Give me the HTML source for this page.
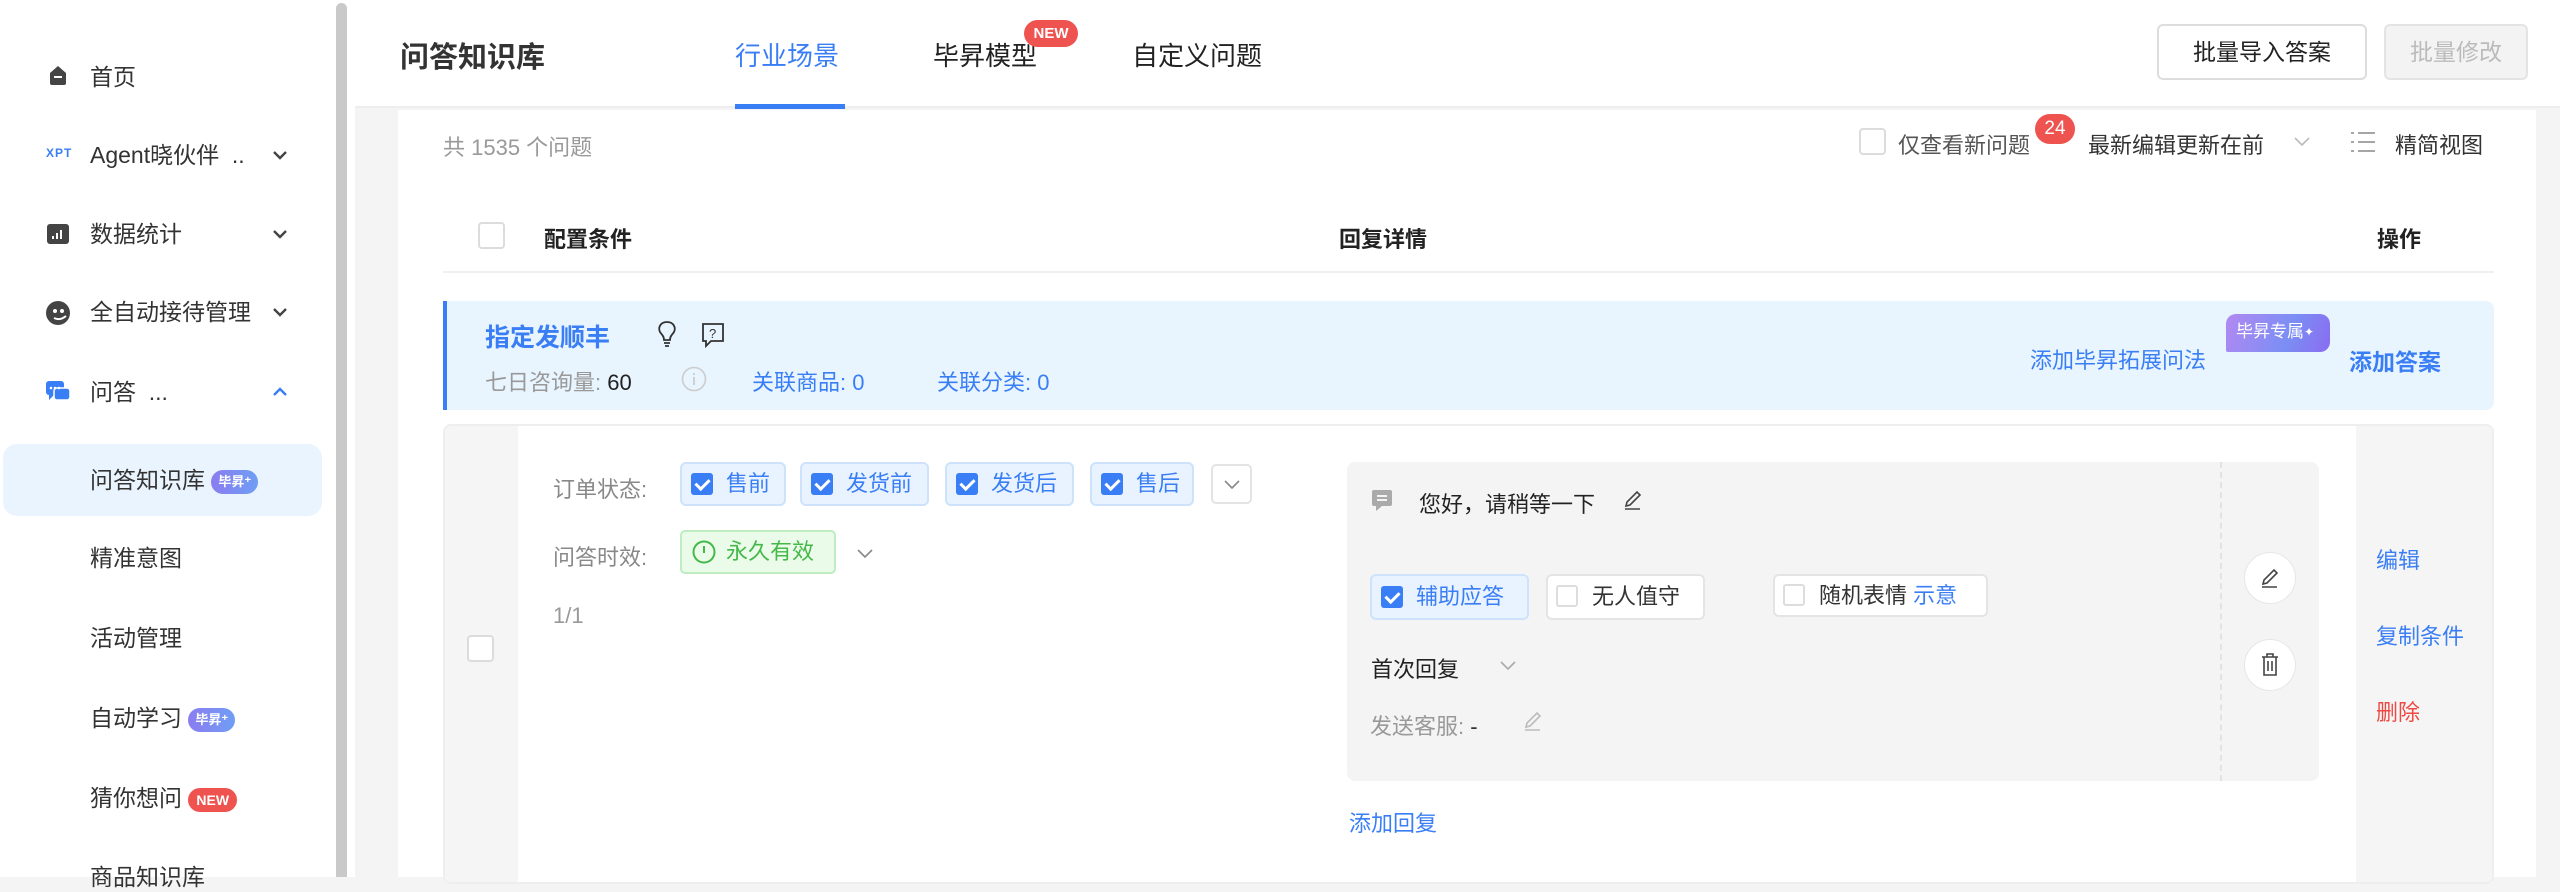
<!DOCTYPE html>
<html><head><meta charset="utf-8"><style>
*{box-sizing:border-box;margin:0;padding:0}
body{width:2560px;height:877px;overflow:hidden;background:#f4f4f5;font-family:"Liberation Sans","Noto Sans CJK SC",sans-serif;color:#333;position:relative}
.a{position:absolute;white-space:nowrap}
.blue{color:#3a7ef5}
.side{position:absolute;left:0;top:0;width:355px;height:877px;background:#fff}
.sb{position:absolute;left:336px;top:3px;width:11px;height:874px;background:#c9c9c9;border-radius:6px 6px 0 0}
.si{position:absolute;left:90px;font-size:23px;color:#333;line-height:30px}
.chev{position:absolute;left:272px;width:16px;height:16px}
.cb{position:absolute;width:27px;height:27px;border:2px solid #dcdcdc;border-radius:4px;background:#fff}
.tag{position:absolute;height:44px;background:#e8f3ff;border:2px solid #cfe2fb;border-radius:6px;font-size:22px;color:#3a7ef5;line-height:40px;padding-left:44px}
.tag i{position:absolute;left:9px;top:9px;width:22px;height:22px;background:#3a7ef5;border-radius:3px}
.tag i:after{content:"";position:absolute;left:7px;top:3px;width:6px;height:11px;border:solid #fff;border-width:0 3px 3px 0;transform:rotate(45deg)}
.bdg{display:inline-block;border-radius:12px;color:#fff;font-size:15px;font-weight:bold;line-height:24px;padding:0 8px;vertical-align:middle}
</style></head><body>
<div class="side">
 <svg class="a" style="left:47px;top:64px" width="22" height="22" viewBox="0 0 22 22"><path d="M3 9 L11 2 L19 9 V19 Q19 21 17 21 H5 Q3 21 3 19Z" fill="#444"/><rect x="7" y="12" width="8" height="2" fill="#fff"/></svg>
 <div class="si" style="top:62px">首页</div>
 <div class="a" style="left:46px;top:146px;font-size:12px;font-weight:bold;color:#3a7ef5;letter-spacing:1px">XPT</div>
 <div class="si" style="top:140px">Agent晓伙伴 &nbsp;..</div>
 <svg class="chev" style="top:147px" viewBox="0 0 16 16"><path d="M2 5 L8 11 L14 5" stroke="#444" stroke-width="2.4" fill="none"/></svg>
 <svg class="a" style="left:47px;top:224px" width="22" height="20"><rect width="22" height="20" rx="3" fill="#444"/><path d="M6 15V12M10 15V9M14 15V6" stroke="#fff" stroke-width="2"/></svg>
 <div class="si" style="top:219px">数据统计</div>
 <svg class="chev" style="top:226px" viewBox="0 0 16 16"><path d="M2 5 L8 11 L14 5" stroke="#444" stroke-width="2.4" fill="none"/></svg>
 <svg class="a" style="left:46px;top:301px" width="24" height="24"><circle cx="12" cy="12" r="12" fill="#444"/><circle cx="9" cy="10" r="2" fill="#fff"/><circle cx="16" cy="10" r="2" fill="#fff"/><path d="M8 17 Q14 20 20 15" stroke="#fff" stroke-width="2" fill="none"/></svg>
 <div class="si" style="top:297px">全自动接待管理</div>
 <svg class="chev" style="top:304px" viewBox="0 0 16 16"><path d="M2 5 L8 11 L14 5" stroke="#444" stroke-width="2.4" fill="none"/></svg>
 <svg class="a" style="left:46px;top:380px" width="24" height="24"><rect x="0" y="1" width="18" height="14" rx="3" fill="#3a7ef5"/><path d="M3 15 L3 20 L8 15Z" fill="#3a7ef5"/><rect x="8" y="8" width="16" height="12" rx="3" fill="#3a7ef5" stroke="#fff" stroke-width="1.5"/><circle cx="5" cy="8" r="1.3" fill="#fff"/><circle cx="9" cy="8" r="1.3" fill="#fff"/><circle cx="13" cy="8" r="1.3" fill="#fff"/></svg>
 <div class="si blue" style="top:377px">问答 &nbsp;...</div>
 <svg class="chev" style="top:384px" viewBox="0 0 16 16"><path d="M2 11 L8 5 L14 11" stroke="#3a7ef5" stroke-width="2.4" fill="none"/></svg>
 <div class="a" style="left:3px;top:444px;width:319px;height:72px;background:#e9f4fe;border-radius:14px"></div>
 <div class="si blue" style="top:465px">问答知识库 <span class="bdg" style="background:linear-gradient(90deg,#8b7cf0,#6f9ef5);font-size:13px;padding:0 7px">毕昇⁺</span></div>
 <div class="si" style="top:543px">精准意图</div>
 <div class="si" style="top:623px">活动管理</div>
 <div class="si" style="top:703px">自动学习 <span class="bdg" style="background:linear-gradient(90deg,#8b7cf0,#6f9ef5);font-size:13px;padding:0 7px">毕昇⁺</span></div>
 <div class="si" style="top:783px">猜你想问 <span class="bdg" style="background:#ee5350;font-size:14px">NEW</span></div>
 <div class="si" style="top:862px">商品知识库</div>
 <div class="sb"></div>
</div>
<!-- header -->
<div class="a" style="left:355px;top:0;width:2205px;height:108px;background:#fff;border-bottom:2px solid #eee"></div>
<div class="a" style="left:400px;top:34px;font-size:29px;font-weight:bold;color:#333">问答知识库</div>
<div class="a blue" style="left:735px;top:36px;font-size:26px">行业场景</div>
<div class="a" style="left:735px;top:104px;width:110px;height:5px;background:#3a7ef5"></div>
<div class="a" style="left:933px;top:36px;font-size:26px;color:#222">毕昇模型</div>
<div class="a" style="left:1024px;top:20px;width:54px;height:27px;border-radius:14px;background:#ee5350;color:#fff;font-size:15px;font-weight:bold;text-align:center;line-height:27px">NEW</div>
<div class="a" style="left:1132px;top:36px;font-size:26px;color:#222">自定义问题</div>
<div class="a" style="left:2157px;top:24px;width:210px;height:56px;border:2px solid #ddd;border-radius:6px;background:#fff;font-size:23px;text-align:center;line-height:52px;color:#222">批量导入答案</div>
<div class="a" style="left:2384px;top:24px;width:144px;height:56px;border:2px solid #e4e4e4;border-radius:6px;background:#f3f3f3;font-size:23px;text-align:center;line-height:52px;color:#bbb">批量修改</div>
<!-- content panel -->
<div class="a" style="left:398px;top:110px;width:2138px;height:767px;background:#fff"></div>
<div class="a" style="left:443px;top:130px;font-size:22px;color:#999">共 1535 个问题</div>
<div class="cb" style="left:1859px;top:128px"></div>
<div class="a" style="left:1898px;top:128px;font-size:22px;color:#555">仅查看新问题</div>
<div class="a" style="left:2035px;top:114px;width:40px;height:30px;border-radius:15px;background:#ee5350;color:#fff;font-size:19px;text-align:center;line-height:30px">24</div>
<div class="a" style="left:2088px;top:128px;font-size:22px;color:#333">最新编辑更新在前</div>
<svg class="a" style="left:2294px;top:136px" width="16" height="12"><path d="M1 2 L8 9 L15 2" stroke="#bbb" stroke-width="1.6" fill="none"/></svg>
<svg class="a" style="left:2351px;top:131px" width="24" height="22"><path d="M0 2h3M7 2h17M0 11h3M7 11h17M0 20h3M7 20h17" stroke="#888" stroke-width="1.6"/></svg>
<div class="a" style="left:2395px;top:128px;font-size:22px;color:#333">精简视图</div>
<!-- table head -->
<div class="cb" style="left:478px;top:222px"></div>
<div class="a" style="left:544px;top:222px;font-size:22px;font-weight:bold;color:#222">配置条件</div>
<div class="a" style="left:1339px;top:222px;font-size:22px;font-weight:bold;color:#222">回复详情</div>
<div class="a" style="left:2377px;top:222px;font-size:22px;font-weight:bold;color:#222">操作</div>
<div class="a" style="left:443px;top:271px;width:2051px;height:2px;background:#f0f0f0"></div>
<!-- blue row -->
<div class="a" style="left:443px;top:301px;width:2051px;height:109px;background:#e8f4fe;border-left:4px solid #3a7ef5;border-radius:0 8px 8px 0"></div>
<div class="a blue" style="left:485px;top:318px;font-size:25px;font-weight:bold">指定发顺丰</div>
<svg class="a" style="left:656px;top:320px" width="22" height="28"><path d="M11 2 C4 2 2 8 4 12 C6 15 8 16 8 20 H14 C14 16 16 15 18 12 C20 8 18 2 11 2Z M8 23 H14 M9 26 H13" stroke="#333" stroke-width="1.8" fill="none"/></svg>
<svg class="a" style="left:701px;top:322px" width="24" height="26"><path d="M2 2 H22 V19 H10 L5 24 V19 H2Z" stroke="#333" stroke-width="1.8" fill="none"/><text x="8" y="16" font-size="13" fill="#333" font-family="Liberation Sans">?</text></svg>
<div class="a" style="left:485px;top:365px;font-size:22px;color:#999">七日咨询量: <span style="color:#222">60</span></div>
<svg class="a" style="left:681px;top:366px" width="26" height="26"><circle cx="13" cy="13" r="11.5" stroke="#ccc" stroke-width="1.6" fill="none"/><path d="M13 11v8M13 7v2" stroke="#ccc" stroke-width="1.8"/></svg>
<div class="a blue" style="left:752px;top:365px;font-size:22px">关联商品: 0</div>
<div class="a blue" style="left:937px;top:365px;font-size:22px">关联分类: 0</div>
<div class="a blue" style="left:2030px;top:343px;font-size:22px">添加毕昇拓展问法</div>
<div class="a" style="left:2226px;top:314px;width:104px;height:38px;border-radius:10px 10px 10px 2px;background:linear-gradient(110deg,#b189f2,#7b8ef4 60%,#8a6cf0);color:#fff;font-size:17px;line-height:36px;padding-left:10px">毕昇专属<span style="font-size:12px;vertical-align:top">✦</span></div>
<div class="a blue" style="left:2349px;top:343px;font-size:23px;font-weight:bold">添加答案</div>
<!-- card -->
<div class="a" style="left:443px;top:424px;width:2051px;height:460px;border:2px solid #eee;border-radius:8px;background:#fff;overflow:hidden">
 <div class="a" style="left:0;top:0;width:73px;height:460px;background:#f5f5f5"></div>
 <div class="a" style="left:1911px;top:0;width:140px;height:460px;background:#f5f5f5"></div>
</div>
<div class="cb" style="left:467px;top:635px"></div>
<div class="a" style="left:553px;top:472px;font-size:22px;color:#888">订单状态:</div>
<div class="tag" style="left:680px;top:462px;width:106px"><i></i>售前</div>
<div class="tag" style="left:800px;top:462px;width:129px"><i></i>发货前</div>
<div class="tag" style="left:945px;top:462px;width:129px"><i></i>发货后</div>
<div class="tag" style="left:1090px;top:462px;width:104px"><i></i>售后</div>
<div class="a" style="left:1211px;top:464px;width:41px;height:40px;border:2px solid #e4e4e4;border-radius:5px;background:#fff"></div>
<svg class="a" style="left:1224px;top:479px" width="16" height="12"><path d="M1 2 L8 9 L15 2" stroke="#888" stroke-width="1.6" fill="none"/></svg>
<div class="a" style="left:553px;top:540px;font-size:22px;color:#888">问答时效:</div>
<div class="a" style="left:680px;top:530px;width:156px;height:44px;background:#eafbe9;border:2px solid #bfecc0;border-radius:5px;font-size:22px;color:#45b84a;line-height:40px;padding-left:44px">永久有效</div>
<svg class="a" style="left:692px;top:540px" width="24" height="24"><circle cx="12" cy="12" r="10.5" stroke="#45b84a" stroke-width="2" fill="none"/><path d="M12 6v7h0" stroke="#45b84a" stroke-width="2"/></svg>
<svg class="a" style="left:857px;top:548px" width="16" height="12"><path d="M1 2 L8 9 L15 2" stroke="#888" stroke-width="1.6" fill="none"/></svg>
<div class="a" style="left:553px;top:603px;font-size:22px;color:#999">1/1</div>
<!-- reply box -->
<div class="a" style="left:1347px;top:462px;width:972px;height:319px;background:#f4f4f4;border-radius:8px"></div>
<div class="a" style="left:2220px;top:462px;height:319px;border-left:2px dashed #e2e2e2"></div>
<svg class="a" style="left:1370px;top:488px" width="24" height="26"><path d="M4 2 H20 Q22 2 22 4 V16 Q22 18 20 18 H12 L6 23 V18 H4 Q2 18 2 16 V4 Q2 2 4 2Z" fill="#aaa"/><path d="M7 8h10M7 12h10" stroke="#fff" stroke-width="1.8"/></svg>
<div class="a" style="left:1419px;top:487px;font-size:22px;color:#222">您好，请稍等一下</div>
<svg class="a" style="left:1622px;top:489px" width="22" height="22"><path d="M4 17 L5 13 L15 3 L18 6 L8 16Z M3 20 H18" stroke="#444" stroke-width="1.6" fill="none"/></svg>
<div class="tag" style="left:1370px;top:574px;width:159px;height:46px;line-height:42px"><i style="top:10px"></i>辅助应答</div>
<div class="a" style="left:1546px;top:574px;width:159px;height:46px;background:#fff;border:2px solid #e4e4e4;border-radius:6px;font-size:22px;line-height:42px;padding-left:44px;color:#333">无人值守</div>
<div class="a" style="left:1556px;top:585px;width:22px;height:22px;border:2px solid #ddd;border-radius:3px"></div>
<div class="a" style="left:1773px;top:574px;width:215px;height:43px;background:#fff;border:2px solid #e4e4e4;border-radius:6px;font-size:22px;line-height:39px;padding-left:44px;color:#333">随机表情 <span class="blue">示意</span></div>
<div class="a" style="left:1783px;top:584px;width:22px;height:22px;border:2px solid #ddd;border-radius:3px"></div>
<div class="a" style="left:1371px;top:652px;font-size:22px;color:#222">首次回复</div>
<svg class="a" style="left:1500px;top:660px" width="16" height="12"><path d="M1 2 L8 9 L15 2" stroke="#aaa" stroke-width="1.6" fill="none"/></svg>
<div class="a" style="left:1370px;top:709px;font-size:22px;color:#999">发送客服: <span style="color:#333">-</span></div>
<svg class="a" style="left:1522px;top:710px" width="22" height="22"><path d="M4 17 L5 13 L15 3 L18 6 L8 16Z M3 20 H18" stroke="#bbb" stroke-width="1.6" fill="none"/></svg>
<div class="a" style="left:2244px;top:552px;width:52px;height:52px;border-radius:50%;background:#fff;border:1.5px solid #e6e6e6"></div>
<svg class="a" style="left:2259px;top:567px" width="22" height="22"><path d="M4 17 L5 13 L15 3 L18 6 L8 16Z M3 20 H18" stroke="#444" stroke-width="1.6" fill="none"/></svg>
<div class="a" style="left:2244px;top:639px;width:52px;height:52px;border-radius:50%;background:#fff;border:1.5px solid #e6e6e6"></div>
<svg class="a" style="left:2260px;top:652px" width="20" height="26"><path d="M2 5 H18 M7 5 V2 H13 V5 M4 5 V23 H16 V5 M8 9 V19 M12 9 V19" stroke="#444" stroke-width="1.6" fill="none"/></svg>
<div class="a blue" style="left:1349px;top:806px;font-size:22px">添加回复</div>
<div class="a blue" style="left:2376px;top:543px;font-size:22px">编辑</div>
<div class="a blue" style="left:2376px;top:619px;font-size:22px">复制条件</div>
<div class="a" style="left:2376px;top:695px;font-size:22px;color:#ee4a45">删除</div>
</body></html>
